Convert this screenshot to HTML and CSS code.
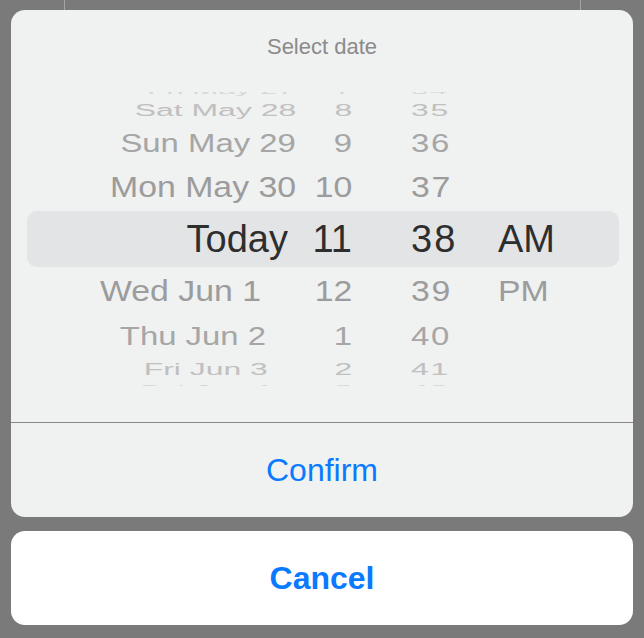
FILE: index.html
```html
<!DOCTYPE html>
<html lang="en">
<head>
<meta charset="utf-8">
<title>Select date</title>
<link rel="stylesheet" href="styles.css">
</head>
<body>
<div class="sheet">
  <section class="card">
    <div class="title">Select date</div>
    <div class="picker">
      <div class="wheel">
        <div class="row up4"><span class="c date">Fri May 27</span><span class="c hour">7</span><span class="c min">34</span><span class="c ampm"></span></div>
        <div class="row up3"><span class="c date">Sat May 28</span><span class="c hour">8</span><span class="c min">35</span><span class="c ampm"></span></div>
        <div class="row up2"><span class="c date">Sun May 29</span><span class="c hour">9</span><span class="c min">36</span><span class="c ampm"></span></div>
        <div class="row up1"><span class="c date">Mon May 30</span><span class="c hour">10</span><span class="c min">37</span><span class="c ampm"></span></div>
        <div class="row sel"><span class="c date">Today</span><span class="c hour">11</span><span class="c min">38</span><span class="c ampm">AM</span></div>
        <div class="row dn1"><span class="c date">Wed Jun 1</span><span class="c hour">12</span><span class="c min">39</span><span class="c ampm">PM</span></div>
        <div class="row dn2"><span class="c date">Thu Jun 2</span><span class="c hour">1</span><span class="c min">40</span><span class="c ampm"></span></div>
        <div class="row dn3"><span class="c date">Fri Jun 3</span><span class="c hour">2</span><span class="c min">41</span><span class="c ampm"></span></div>
        <div class="row dn4"><span class="c date">Sat Jun 4</span><span class="c hour">3</span><span class="c min">42</span><span class="c ampm"></span></div>
      </div>
    </div>
    <div class="divider"></div>
    <button class="action confirm" type="button">Confirm</button>
  </section>
  <button class="cancel" type="button">Cancel</button>
</div>
</body>
</html>
```

FILE: styles.css
```css
* { box-sizing: border-box; }

html, body {
  margin: 0;
  padding: 0;
}

body {
  width: 644px;
  height: 638px;
  overflow: hidden;
  font-family: "Liberation Sans", Arial, sans-serif;
  background:
    linear-gradient(#a4a4a4, #a4a4a4) 64px 0 / 1px 10px no-repeat,
    linear-gradient(#a4a4a4, #a4a4a4) 580px 0 / 1px 10px no-repeat,
    #7a7a7a;
}

.sheet {
  display: flex;
  flex-direction: column;
  gap: 14px;
  padding: 10px 11px 0;
}

.card {
  display: flex;
  flex-direction: column;
  height: 507px;
  background: #f0f1f1;
  border-radius: 14px;
  overflow: hidden;
}

.title {
  height: 74px;
  display: flex;
  align-items: center;
  justify-content: center;
  font-size: 22px;
  color: #8b8b8b;
}

.picker {
  margin-top: 8px;
  height: 294px;
  overflow: hidden;
  display: flex;
  flex-direction: column;
  justify-content: center;
}

.wheel {
  display: flex;
  flex-direction: column;
  flex-shrink: 0;
}

.row {
  display: grid;
  grid-template-columns: 285px 56px 146px 1fr;
  align-items: center;
  font-size: 38px;
  line-height: 38px;
  white-space: nowrap;
}

/* negative block margins let the text overflow its (short) row evenly */
.c {
  display: block;
  height: 38px;
  margin-top: -20px;
  margin-bottom: -20px;
}

.date { justify-self: end; transform-origin: right center; }
.hour { justify-self: end; transform-origin: right center; }
.min  { justify-self: start; margin-left: 59px; letter-spacing: 2px; transform-origin: left center; }
.ampm { justify-self: start; transform-origin: left center; }

.sel {
  height: 56px;
  margin: 0 14px 0 16px;
  grid-template-columns: 269px 56px 146px 1fr;
  background: #e3e4e5;
  border-radius: 10px;
  color: #2e2e2e;
}
.sel .date { margin-right: 8px; }

.up1, .dn1 { height: 48px; color: #9c9c9c; }
.up2, .dn2 { height: 41px; color: #a6a6a6; }
.up3, .dn3 { height: 25px; color: #c0c0c0; }
.up4, .dn4 { height: 13px; color: #d5d5d5; }

.up1 .c, .dn1 .c { transform: scale(0.89, 0.79); }
.up2 .c, .dn2 .c { transform: scale(0.865, 0.66); }
.up3 .c, .dn3 .c { transform: scale(0.84, 0.45); }
.up4 .c, .dn4 .c { transform: scale(0.82, 0.26); }

.up4 .date { margin-right: 2px; }
.dn1 .date { margin-right: 35px; }
.dn2 .date { margin-right: 30px; }
.dn3 .date { margin-right: 28px; }
.dn4 .date { margin-right: 25px; }

.divider {
  margin-top: 36px;
  height: 1px;
  background: #888888;
}

.action, .cancel {
  display: flex;
  align-items: center;
  justify-content: center;
  width: 100%;
  height: 94px;
  border: 0;
  padding: 0;
  font-family: "Liberation Sans", Arial, sans-serif;
  font-size: 32px;
  color: #0a7aff;
  background: transparent;
}

.cancel {
  background: #ffffff;
  border-radius: 14px;
  font-weight: 700;
}
```
